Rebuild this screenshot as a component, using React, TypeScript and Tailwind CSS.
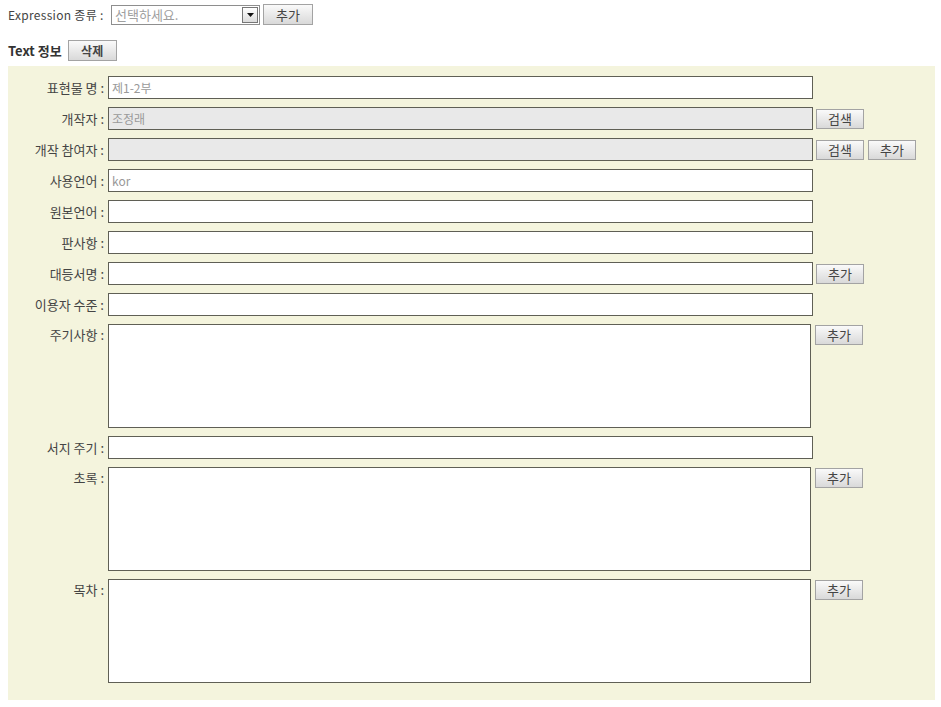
import React from "react";

const font = { fontFamily: '"Noto Sans CJK KR", "Noto Sans", sans-serif' };

function Btn({ children, className = "" }: { children: React.ReactNode; className?: string }) {
  return (
    <button
      className={`h-[20px] w-[48px] shrink-0 border border-[#a3a3a3] bg-gradient-to-b from-[#fafafa] to-[#d9d9d9] text-[12px] leading-[18px] text-[#444] ${className}`}
    >
      {children}
    </button>
  );
}

type Row = {
  label: string;
  kind: "input" | "area";
  value?: string;
  disabled?: boolean;
  buttons?: string[];
};

const rows: Row[] = [
  { label: "표현물 명 :", kind: "input", value: "제1-2부" },
  { label: "개작자 :", kind: "input", value: "조정래", disabled: true, buttons: ["검색"] },
  { label: "개작 참여자 :", kind: "input", disabled: true, buttons: ["검색", "추가"] },
  { label: "사용언어 :", kind: "input", value: "kor" },
  { label: "원본언어 :", kind: "input" },
  { label: "판사항 :", kind: "input" },
  { label: "대등서명 :", kind: "input", buttons: ["추가"] },
  { label: "이용자 수준 :", kind: "input" },
  { label: "주기사항 :", kind: "area", buttons: ["추가"] },
  { label: "서지 주기 :", kind: "input" },
  { label: "초록 :", kind: "area", buttons: ["추가"] },
  { label: "목차 :", kind: "area", buttons: ["추가"] },
];

export default function App() {
  return (
    <div className="min-h-[707px] w-[941px] bg-white text-[12px] text-[#444]" style={font}>
      {/* expression type */}
      <div className="flex items-center pl-[8px] pt-[4px]">
        <span className="w-[103px] shrink-0 tracking-[0.3px]">Expression 종류 :</span>
        <div className="flex h-[20px] w-[149px] items-center justify-between border border-[#8e8e8e] bg-white pl-[3px] pr-[1px]">
          <span className="text-[13px] text-[#a0a0a0]">선택하세요.</span>
          <span className="flex h-[16px] w-[16px] items-center justify-center border border-[#777] bg-gradient-to-b from-white to-[#dcdcdc]">
            <svg width="7" height="4" viewBox="0 0 7 4">
              <path d="M0 0h7L3.5 4z" fill="#111" />
            </svg>
          </span>
        </div>
        <Btn className="ml-[3px] h-[21px] w-[50px] text-[13px]">추가</Btn>
      </div>

      {/* text info header */}
      <div className="mt-[15px] flex items-center gap-[6px] pl-[8px]">
        <span className="text-[13px] font-bold text-[#333]">Text 정보</span>
        <Btn className="h-[21px] w-[49px] font-bold">삭제</Btn>
      </div>

      {/* form panel */}
      <div className="ml-[8px] mt-[5px] flex w-[927px] flex-col gap-[8px] bg-[#f4f4dd] pb-[17px] pt-[10px]">
        {rows.map((r) => (
          <div key={r.label} className={`flex ${r.kind === "area" ? "items-start" : "items-center"}`}>
            <span className={`w-[96px] shrink-0 text-right text-[13px] ${r.kind === "area" ? "pt-[1px]" : ""}`}>{r.label}</span>
            {r.kind === "input" ? (
              <div
                className={`ml-[4px] flex h-[23px] w-[705px] shrink-0 items-center border border-[#5f5f55] px-[3px] text-[#999] ${
                  r.disabled ? "bg-[#e9e9e9]" : "bg-white"
                }`}
              >
                {r.value}
              </div>
            ) : (
              <div className="ml-[4px] h-[104px] w-[703px] shrink-0 border border-[#5f5f55] bg-white" />
            )}
            {r.buttons && (
              <div className={`flex gap-[4px] ${r.kind === "area" ? "ml-[4px] mt-[1px]" : "ml-[3px]"}`}>
                {r.buttons.map((b) => (
                  <Btn key={b} className="text-[13px]">{b}</Btn>
                ))}
              </div>
            )}
          </div>
        ))}
      </div>
    </div>
  );
}
